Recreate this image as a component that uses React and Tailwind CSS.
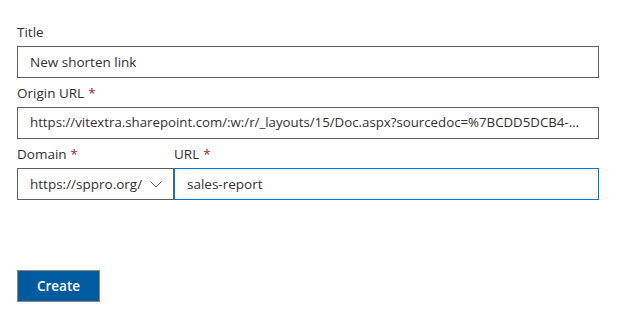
import { useState } from "react";

function FieldLabel({ text, required }) {
  return (
    <label className="block pt-[5px] pb-[4px] text-[13.5px] leading-5 text-[#323130]">
      {text}
      {required && <span className="pl-1 text-[#a4262c]">*</span>}
    </label>
  );
}

function TextBox({ value, focused, small, className = "" }) {
  return (
    <div
      className={`h-8 flex items-center px-3 border bg-white ${
        focused ? "border-[#0078d4]" : "border-[#605e5c]"
      } ${className}`}
    >
      <span className={`truncate text-[#323130] ${small ? "text-[13.25px]" : "text-[13.5px]"}`}>
        {value}
      </span>
    </div>
  );
}

export default function App() {
  const [title] = useState("New shorten link");
  const [origin] = useState(
    "https://vitextra.sharepoint.com/:w:/r/_layouts/15/Doc.aspx?sourcedoc=%7BCDD5DCB4-..."
  );
  const [slug] = useState("sales-report");

  return (
    <div className="w-[618px] h-[319px] bg-white px-[17px] pt-[17px] font-['Open_Sans',sans-serif]">
      <div className="w-[582px]">
        <FieldLabel text="Title" />
        <TextBox value={title} />

        <FieldLabel text="Origin URL" required />
        <TextBox value={origin} small />

        <div className="flex">
          <div className="w-[157px]">
            <FieldLabel text="Domain" required />
            <div className="h-8 flex items-center justify-between pl-3 pr-[11px] border border-[#605e5c] bg-white">
              <span className="text-[13.5px] text-[#323130]">https://sppro.org/</span>
              <svg width="12" height="7" viewBox="0 0 12 7" fill="none">
                <path d="M0.5 0.5 L6 6 L11.5 0.5" stroke="#605e5c" strokeWidth="1" />
              </svg>
            </div>
          </div>
          <div className="flex-1">
            <FieldLabel text="URL" required />
            <TextBox value={slug} focused />
          </div>
        </div>

        <button className="mt-[70px] w-[83px] h-8 bg-[#005a9e] border border-[#8a8886] text-white text-[13.5px] font-semibold">
          Create
        </button>
      </div>
    </div>
  );
}
